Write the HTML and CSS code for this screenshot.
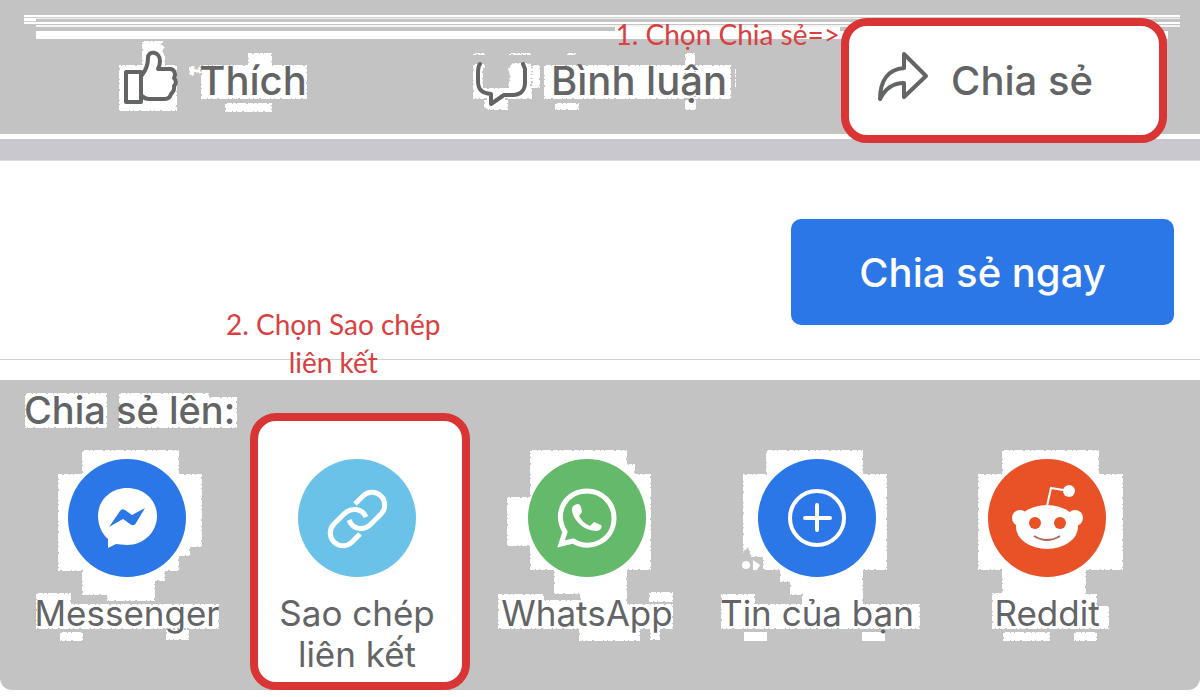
FILE: index.html
```html
<!DOCTYPE html>
<html lang="vi">

<head>
    <meta charset="UTF-8">
    <meta name="viewport" content="width=device-width, initial-scale=1.0">
    <title>Chia sẻ</title>
    <link rel="stylesheet" href="styles.css">
</head>

<body>
    <div class="action-bar">
        <div class="stripes"></div>
        <div class="step step-one">1. Chọn Chia sẻ=&gt;</div>
        <button class="action">
            <svg class="patch" width="200" height="70" viewBox="115 44 200 70" aria-hidden="true">
                <path d="M142 39h23l-4 3 4 3-3 4 3 4v10h12v46h-58V63h23zM189 64h5l2 4 5-5v9l-6-2-2 4-4-2zM201 63h47V51h24v12h35v34H201zM225 101h47v9h-47z"/>
            </svg>
            <svg class="icon" width="54" height="56" viewBox="123 51 54 56" aria-hidden="true">
                <path d="M126 70h15v30h-15zM142 73c4-5 6-10 6-17 0-8 12-7 12 3 0 4-1 6-2 8h12c5 0 6 6 4 9 3 3 2 6 0 8 1 4-1 6-3 8-1 4-3 5-6 5h-16c-3 0-5-1-7-3"/>
            </svg>
            <span>Thích</span>
        </button>
        <button class="action">
            <svg class="patch" width="270" height="70" viewBox="466 44 270 70" aria-hidden="true">
                <path d="M473 62h12v4h-2v20h25l2-12-2-8 5-5h17l2 5v31h-59zM484 97h24v11h-19l-5-3zM473 51h12v2h-12zM509 51h22v2h-22zM566 51h10v2h-10zM532 63h8v23h-9zM544 63h187v34H544zM555 101h24v7h-24zM685 51h10v46h-10zM685 97h11v11h-11zM735 66h1v20h-1z"/>
            </svg>
            <svg class="icon" width="54" height="48" viewBox="472 55 54 48" aria-hidden="true">
                <path d="M477 62c-2 2-2 5-2 10v7c0 9 4 12 13 13v10l13-9h10c8-1 11-5 11-13V67l-2-5"/>
            </svg>
            <span>Bình luận</span>
        </button>
        <button class="action action-marked">
            <svg class="icon" width="54" height="52" viewBox="873 54 54 52" aria-hidden="true">
                <path d="M902 53l22 22-22 21V82c-12 0-19 6-24 16 0-18 8-30 24-31z"/>
            </svg>
            <span>Chia sẻ</span>
        </button>
    </div>
    <div class="divider"></div>

    <div class="composer">
        <button class="share-now">Chia sẻ ngay</button>
        <div class="step step-two">2. Chọn Sao chép<br>liên kết</div>
    </div>

    <div class="share-panel">
        <h2>
            <svg class="patch" width="220" height="40" viewBox="20 390 220 40" aria-hidden="true">
                <path d="M25 393h82v35H25zM119 393h90v4h28v31H119z"/>
            </svg>
            Chia sẻ lên:
        </h2>
        <div class="apps">
            <button class="app">
                <svg class="art" width="230" height="204" viewBox="12 442 230 204" aria-hidden="true">
                    <path class="torn" d="M82 450h97v24h23v73h-12v9h-11v15h-14v10h-10v20h-48v-6H82v-24H58v-97h24zM36 593h35v11h148v25H36zM60 632h23v9H60zM166 629h23v11h-23z"/>
                    <circle cx="127" cy="518" r="59" fill="#2c77e8"/>
                    <path fill="#fff" d="M127 488c17 0 30 12 30 28s-13 29-30 29c-4 0-8-1-11-1l-8 4v-9c-6-5-10-14-10-23 0-16 13-28 29-28z"/>
                    <path fill="#2c77e8" d="M109 527l11-16q2-3 5-1l7 5 13-7-9 15q-2 4-6 1l-7-5z"/>
                </svg>
                <span>Messenger</span>
            </button>
            <button class="app app-marked">
                <svg class="art" width="230" height="204" viewBox="242 442 230 204" aria-hidden="true">
                    <circle cx="357" cy="518" r="59" fill="#6bc2e8"/>
                    <g fill="none" stroke="#fff" stroke-width="5">
                        <path d="M355 504l8-8c5-5 13-5 18 0s5 13 0 18l-10 10c-7 7-18 6-22-4"/>
                        <path d="M366 517c-4-9-15-10-22-3l-10 10c-5 5-5 13 0 18s13 5 18 0l8-8"/>
                    </g>
                </svg>
                <span>Sao chép<br>liên kết</span>
            </button>
            <button class="app">
                <svg class="art" width="230" height="204" viewBox="472 442 230 204" aria-hidden="true">
                    <path class="torn" d="M530 450h97v14h8v10h16v96h-24v34h46v25h-13v11h-10v-11h-10v12h-61v-12h-81v-35h46v6h36v-6h-26v-24h-24v-24h-23v-49h23zM649 592h24v10h-24z"/>
                    <circle cx="587" cy="518" r="59" fill="#65b96a"/>
                    <path fill="none" stroke="#fff" stroke-width="5" d="M561 544l4-12c-12-21 2-41 22-41 15 0 27 12 27 27 0 22-23 34-41 23z"/>
                    <path fill="#fff" d="M575 505c3-2 5-1 6 2l1 5-3 4c3 5 6 8 11 10l4-4 7 3c2 2-1 6-4 6-14 0-25-12-25-22 0-2 1-3 3-4z"/>
                </svg>
                <span>WhatsApp</span>
            </button>
            <button class="app">
                <svg class="art" width="230" height="204" viewBox="702 442 230 204" aria-hidden="true">
                    <path class="torn" d="M766 450h97v24h24v96h-24v34h57v25H721v-35h34v10h47v-9h-12v-13h-10v-12h-17v-13h-12l-3-10-5 6v-79h23z"/>
                    <path fill="#fff" d="M744 632h23v9h-23zM862 632h23v9h-23zM753 560l7 5-3 5h-4z"/>
                    <circle cx="746" cy="565" r="4" fill="#fff"/>
                    <circle cx="817" cy="518" r="59" fill="#2c77e8"/>
                    <circle cx="817" cy="518" r="27" fill="none" stroke="#fff" stroke-width="4"/>
                    <path fill="none" stroke="#fff" stroke-width="4" stroke-linecap="round" d="M805 518h25M817 505v25"/>
                </svg>
                <span>Tin của bạn</span>
            </button>
            <button class="app">
                <svg class="art" width="230" height="204" viewBox="932 442 230 204" aria-hidden="true">
                    <path class="torn" d="M1002 450h97v24h24v96h-37v24h11v12h12v23H992v-36h10v-23h-24v-96h24zM1003 632h47v9h-47zM1074 632h23v9h-23z"/>
                    <circle cx="1047" cy="518" r="59" fill="#e95127"/>
                    <g fill="#fff">
                        <circle cx="1020" cy="518" r="8"/>
                        <circle cx="1075" cy="518" r="8"/>
                        <circle cx="1069" cy="491" r="6"/>
                        <ellipse cx="1047" cy="527" rx="31" ry="22"/>
                    </g>
                    <path fill="none" stroke="#fff" stroke-width="2" d="M1047 506l4-18 18 3"/>
                    <g fill="#e95127">
                        <circle cx="1035" cy="523" r="6"/>
                        <circle cx="1060" cy="523" r="6"/>
                    </g>
                    <path fill="none" stroke="#a8655a" stroke-width="2" d="M1034 536q13 8 26 0"/>
                </svg>
                <span>Reddit</span>
            </button>
        </div>
    </div>
</body>

</html>
```
FILE: styles.css
```css
*,
*::before {
    box-sizing: border-box;
}

body {
    font-family: Inter, "Noto Sans", sans-serif;
    background-color: white;
    color: #636466;
    margin: 0;
}

button {
    position: relative;
    padding: 0;
    border: none;
    background: none;
    color: inherit;
    font: inherit;
    cursor: pointer;
}

/* Top bar */
.action-bar {
    position: relative;
    display: grid;
    grid-template-columns: 430fr 342fr 428fr;
    align-items: center;
    height: 134px;
    padding-top: 18px;
    background-color: #c3c3c3;
}

.stripes {
    position: absolute;
    top: 15px;
    left: 36px;
    right: 20px;
    height: 24px;
    background:
        linear-gradient(white, white) left bottom / calc(100% - 12px) 8px no-repeat,
        linear-gradient(white 2px, #d0d0d0 2px 3px, #eeeeee 3px 4px, #c3c3c3 4px 7px, white 7px 9px, #c3c3c3 9px 10px, #f4f4f4 10px 12px, #c3c3c3 12px);
}

.stripes::before {
    content: "";
    position: absolute;
    left: -12px;
    width: 12px;
    height: 9px;
    background: linear-gradient(white 2px, #d0d0d0 2px 3px, white 3px 6px, #d0d0d0 6px 7px, white 7px);
}

.action {
    display: flex;
    align-items: center;
    justify-content: center;
    gap: 22px;
    height: 122px;
    font-size: 40px;
    font-weight: 500;
}

.action span {
    position: relative;
}

.icon {
    position: relative;
    overflow: visible;
    fill: none;
    stroke: #636466;
    stroke-width: 4;
    stroke-linejoin: round;
    stroke-linecap: round;
}

.patch {
    position: absolute;
    overflow: visible;
}

/* White areas with ragged edges */
.patch,
.torn {
    fill: white;
    stroke: #c3c3c3;
    stroke-width: 2;
    stroke-dasharray: 2 5 1 3 1 9;
}

.action-marked {
    justify-self: end;
    width: 326px;
    height: 125px;
    margin-right: 33px;
    padding-right: 40px;
    border: 8px solid #d93535;
    border-radius: 26px;
    background-color: white;
    z-index: 1;
}

.divider {
    height: 27px;
    border-top: 5px solid #fdfdf9;
    border-bottom: 1px solid #dddddd;
    background-color: #c9c8cf;
}

/* Red notes over the page */
.step {
    position: absolute;
    color: #d9403f;
    font-family: Lato, "Open Sans", sans-serif;
    font-size: 28px;
    line-height: 38px;
    text-align: center;
}

.step-one {
    top: 15px;
    right: 360px;
    background: linear-gradient(white, white) 0 12px / 100% 12px no-repeat;
}

.step-two {
    top: 144px;
    left: 226px;
}

.composer {
    position: relative;
    padding: 58px 26px 34px;
    border-bottom: 1px solid #d0d0d0;
    text-align: right;
}

.share-now {
    width: 383px;
    height: 106px;
    border-radius: 10px;
    background-color: #2c77e8;
    color: white;
    font-size: 40px;
    font-weight: 500;
}

/* Bottom sheet */
.share-panel {
    height: 310px;
    margin-top: 20px;
    padding: 8px 38px 0 12px;
    border-radius: 0 0 12px 12px;
    background-color: #c3c3c3;
}

h2 {
    position: relative;
    margin: 0;
    padding-left: 12px;
    font-size: 38px;
    font-weight: 500;
    line-height: 44px;
    isolation: isolate;
}

h2 .patch {
    top: 2px;
    left: 8px;
    z-index: -1;
}

.apps {
    display: grid;
    grid-template-columns: repeat(5, 1fr);
}

.app {
    display: grid;
    justify-items: center;
    align-items: start;
    height: 258px;
    padding-top: 10px;
    font-size: 35px;
    line-height: 41px;
}

.art,
.app span {
    position: relative;
    grid-area: 1 / 1;
}

.app span {
    padding-top: 151px;
}

.app-marked::before {
    content: "";
    position: absolute;
    top: -19px;
    left: 8px;
    right: 2px;
    height: 277px;
    border: 8px solid #d93535;
    border-radius: 26px;
    background-color: white;
}
```
